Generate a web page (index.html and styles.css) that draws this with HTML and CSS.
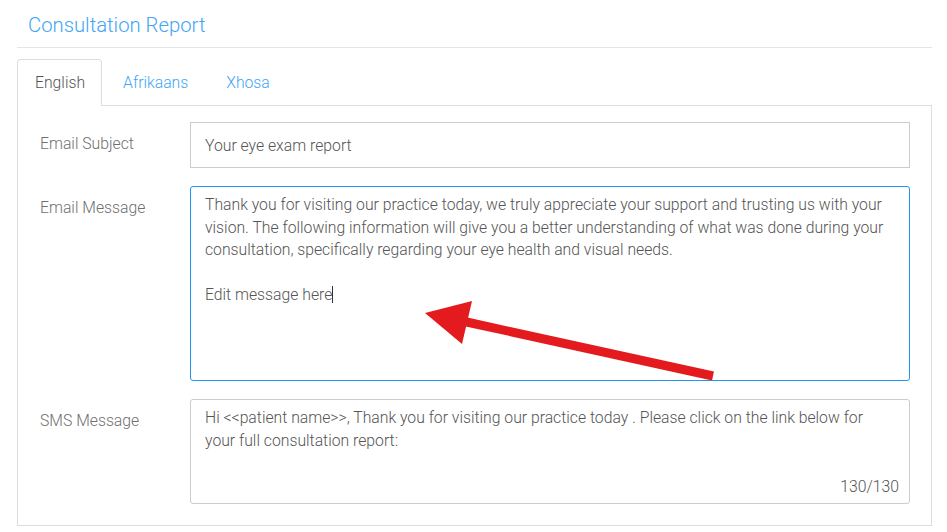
FILE: index.html
```html
<!DOCTYPE html>
<html>
<head>
<meta charset="utf-8">
<title>Consultation Report</title>
<link rel="stylesheet" href="styles.css">
</head>
<body>
	<div class="page">
		<h2 class="page-title">Consultation Report</h2>

		<ul class="tabs">
			<li class="tab active">English</li>
			<li class="tab">Afrikaans</li>
			<li class="tab">Xhosa</li>
		</ul>

		<div class="tab-panel">
			<div class="form-row">
				<label class="form-label">Email Subject</label>
				<div class="control subject">Your eye exam report</div>
			</div>

			<div class="form-row">
				<label class="form-label">Email Message</label>
				<div class="control message focused">Thank you for visiting our practice today, we truly appreciate your support and trusting us with your vision. The following information will give you a better understanding of what was done during your consultation, specifically regarding your eye health and visual needs.<br><br>Edit message here<span class="caret"></span></div>
			</div>

			<div class="form-row">
				<label class="form-label">SMS Message</label>
				<div class="control sms">
					<div class="sms-text">Hi &lt;&lt;patient name&gt;&gt;, Thank you for visiting our practice today . Please click on the link below for your full consultation report:</div>
					<div class="counter">130/130</div>
				</div>
			</div>
		</div>
	</div>

	<!-- red annotation arrow drawn over the screenshot -->
	<svg class="arrow" viewBox="0 0 947 532" width="947" height="532">
		<line x1="713" y1="376" x2="462" y2="321" stroke="#e31b1f" stroke-width="9" />
		<polygon points="425,313 472,301 462,344" fill="#e31b1f" />
	</svg>
</body>
</html>
```

FILE: styles.css
```css
body{
	margin: 0;
	background: #fff;
	font-family: Roboto, "Liberation Sans", sans-serif;
	font-size: 15.75px;
	font-weight: 300;
	color: #555;
}

.page{
	padding: 0 15px 0 17px;
}

.page-title{
	margin: 0;
	padding: 10px 0 7px 11px;
	font-size: 20.3px;
	font-weight: 300;
	line-height: 30px;
	color: #42a5f5;
	border-bottom: 1px solid #e5e5e5;
}

.tabs{
	display: flex;
	list-style: none;
	margin: 11px 0 0 0;
	padding: 0;
}

.tab{
	padding: 0 16px 0 17px;
	margin-right: 3px;
	height: 45px;
	line-height: 45px;
	color: #42a5f5;
	border: 1px solid transparent;
	border-bottom: none;
	border-radius: 4px 4px 0 0;
}

.tab.active{
	color: #555;
	border-color: #ddd;
	background: #fff;
	margin-bottom: -1px;
	height: 46px;
	position: relative;
}

.tab-panel{
	border: 1px solid #ddd;
	padding: 16px 21px 21px 22px;
	display: flex;
	flex-direction: column;
	gap: 18px;
}

.form-row{
	display: flex;
}

.form-label{
	width: 150px;
	flex-shrink: 0;
	padding-top: 13px;
	color: #6f6f6f;
	line-height: 18px;
}

.control{
	flex: 1;
	border: 1px solid #ccc;
	border-radius: 3px;
	padding: 7px 14px 6px;
	line-height: 22.5px;
	color: #555;
}

.subject{
	box-sizing: border-box;
	height: 46px;
	padding-top: 12px;
	border-radius: 0;
}

.message{
	height: 195px;
	box-sizing: border-box;
	padding-right: 20px;
}

.focused{
	border-color: #2196f3;
}

.caret{
	display: inline-block;
	width: 1px;
	height: 17px;
	background: #333;
	vertical-align: -3px;
}

.sms{
	height: 105px;
	box-sizing: border-box;
	display: flex;
	flex-direction: column;
	padding: 6px 10px 5px 14px;
}

.sms-text{
	line-height: 23px;
	padding-right: 30px;
}

.counter{
	margin-top: auto;
	align-self: flex-end;
	line-height: 22px;
}

.arrow{
	position: absolute;
	top: 0;
	left: 0;
	pointer-events: none;
}
```
